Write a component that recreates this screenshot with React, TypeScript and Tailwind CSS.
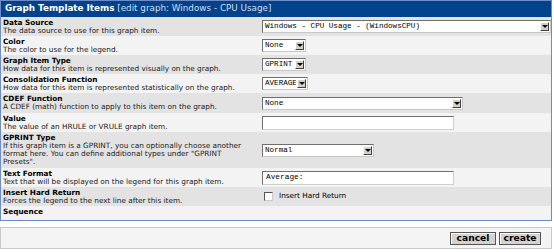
import React from "react";

const sans = "font-['DejaVu_Sans',Verdana,sans-serif]";
const mono = "font-['Liberation_Mono',monospace]";

function Select({ text, className }: { text: string; className: string }) {
  return (
    <div className={"flex h-[13px] border border-t-[#6f6f6f] border-l-[#6f6f6f] border-b-[#c8c8c8] border-r-[#c8c8c8] bg-white " + className}>
      <div className={"flex-1 overflow-hidden whitespace-pre pl-[2px] text-[7.6px] leading-[11px] text-black " + mono}>{text}</div>
      <div className="m-[1px] flex w-[9px] items-center justify-center border border-t-white border-l-white border-b-[#404040] border-r-[#404040] bg-[#d4d0c8]">
        <div className="h-0 w-0 border-x-[3px] border-t-[3px] border-x-transparent border-t-black" />
      </div>
    </div>
  );
}

function TextInput({ value }: { value: string }) {
  return (
    <div className="flex h-[14px] w-[192px] items-center border border-t-[#6f6f6f] border-l-[#6f6f6f] border-b-[#d0d0d0] border-r-[#d0d0d0] bg-white">
      <span className={"whitespace-pre pl-[3px] text-[7.8px] text-black " + mono}>{value}</span>
    </div>
  );
}

const rows = [
  {
    title: "Data Source",
    desc: ["The data source to use for this graph item."],
    field: <Select text="Windows - CPU Usage - (WindowsCPU)" className="w-[289px]" />,
    h: "h-[19px]",
  },
  {
    title: "Color",
    desc: ["The color to use for the legend."],
    field: <Select text="None" className="w-[44px]" />,
    h: "h-[19px]",
  },
  {
    title: "Graph Item Type",
    desc: ["How data for this item is represented visually on the graph."],
    field: <Select text="GPRINT" className="w-[44px]" />,
    h: "h-[19px]",
  },
  {
    title: "Consolidation Function",
    desc: ["How data for this item is represented statistically on the graph."],
    field: <Select text="AVERAGE" className="w-[46px]" />,
    h: "h-[19px]",
  },
  {
    title: "CDEF Function",
    desc: ["A CDEF (math) function to apply to this item on the graph."],
    field: <Select text="None" className="w-[201px]" />,
    h: "h-[20px]",
  },
  {
    title: "Value",
    desc: ["The value of an HRULE or VRULE graph item."],
    field: <TextInput value="" />,
    h: "h-[19px]",
  },
  {
    title: "GPRINT Type",
    desc: [
      "If this graph item is a GPRINT, you can optionally choose another",
      "format here. You can define additional types under \"GPRINT",
      "Presets\".",
    ],
    field: <Select text="Normal" className="w-[112px]" />,
    h: "h-[36px]",
  },
  {
    title: "Text Format",
    desc: ["Text that will be displayed on the legend for this graph item."],
    field: <TextInput value="Average:" />,
    h: "h-[19px]",
  },
  {
    title: "Insert Hard Return",
    desc: ["Forces the legend to the next line after this item."],
    field: (
      <div className="flex items-center pl-[2px]">
        <div className="h-[9px] w-[9px] border border-t-[#555] border-l-[#555] border-b-[#ccc] border-r-[#ccc] bg-white" />
        <span className={"pl-[6px] text-[7.3px] text-black " + sans}>Insert Hard Return</span>
      </div>
    ),
    h: "h-[19px]",
  },
  {
    title: "Sequence",
    desc: [],
    field: null,
    h: "h-[14px]",
  },
];

export default function App() {
  return (
    <div className={"h-[252px] w-[554px] bg-white " + sans}>
      <div className="w-[552px] border border-[#6d8bc6]">
        <div className="flex h-[16px] items-center bg-[#00438c] pl-[4px] text-[8.8px] text-white">
          <span className="font-bold">Graph Template Items</span>
          <span className="whitespace-pre text-[#d6deec]"> [edit graph: Windows - CPU Usage]</span>
        </div>
        {rows.map((r, i) => (
          <div key={r.title} className={"flex " + r.h + (i % 2 === 0 ? " bg-[#e3e3e3]" : " bg-[#f3f3f3]")}>
            <div className="w-[259px] shrink-0 pl-[2px] pt-[2px] text-[7.3px] leading-[8px]">
              <div className="font-bold text-black">{r.title}</div>
              {r.desc.map((d) => (
                <div key={d} className="whitespace-pre text-[#1a1a1a]">{d}</div>
              ))}
            </div>
            <div className="flex items-center pl-[2px]">{r.field}</div>
          </div>
        ))}
      </div>
      <div className="mt-[6px] flex h-[22px] w-[552px] items-center justify-end gap-[3px] border border-[#c9c9c9] bg-[#f4f4f4] pr-[10px]">
        <div className="flex h-[13px] w-[46px] items-center justify-center border border-[#555] bg-[#d6d3ce] text-[9.2px] font-bold text-black shadow-[inset_1px_1px_0_#fff]">
          cancel
        </div>
        <div className="flex h-[13px] w-[42px] items-center justify-center border border-[#555] bg-[#d6d3ce] text-[9.2px] font-bold text-black shadow-[inset_1px_1px_0_#fff]">
          create
        </div>
      </div>
    </div>
  );
}
